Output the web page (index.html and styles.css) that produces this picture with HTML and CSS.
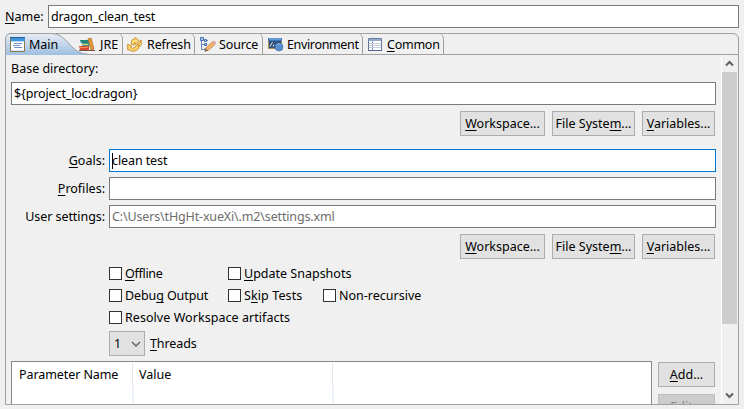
FILE: index.html
```html
<!DOCTYPE html>
<html lang="en">
<head>
<meta charset="utf-8">
<title>Run configuration</title>
<link rel="stylesheet" href="styles.css">
</head>
<body>
<label class="name-row"><span class="name-label"><u>N</u>ame:</span><span class="field name-field">dragon_clean_test</span></label>
<main class="folder">
  <nav class="tabs">
    <div class="tab tab-main">
      <svg class="tab-shape" width="84" height="22" viewBox="0 0 84 22"><defs><linearGradient id="sel" x2="0" y2="1"><stop stop-color="#e9eef5"/><stop offset="1" stop-color="#9fbfe0"/></linearGradient></defs><path d="M0 22V5Q0 0 5 0H46C64 0 64 21 84 21V22Z" fill="url(#sel)"/><path d="M.5 22V6Q1 .5 6 .5H46C64 .5 64 21.5 84 21.5" fill="none" stroke="#a0a0a0"/></svg>
      <svg class="icon" width="16" height="16" viewBox="0 0 16 16"><path d="M.5.5h14v14H.5z" fill="#fff" stroke="#8a7a48"/><path d="M1 1h14v3H1z" fill="#3e96df"/><path d="M0 .5h15" stroke="#245a94"/><path d="M1 4.500h13" stroke="#b8dcf5"/><path d="M4 6.500h8M3 8.500h7M4 10.500h8" stroke="#6f91c7"/><path d="M1 13.500h13" stroke="#d7e8f7"/></svg>
      <span class="t-main">Main</span>
    </div>
    <div class="tab tab-jre">
      <svg class="icon" width="16" height="16" viewBox="0 0 16 16"><path d="M1 3h9v3H2z" fill="#1f8579"/><path d="M3 6h8v3H3z" fill="#42a593"/><path d="M3 7.500h6" stroke="#e0c36b"/><path d="M0 9h10v4H1z" fill="#d94a2c"/><path d="M1 10.500h8" stroke="#f28a55"/><path d="M9 2l3-1 3 11-3 1z" fill="#e79e39" stroke="#a66025" stroke-width=".7"/><path d="M0 13.500h16" stroke="#73564b"/></svg>
      <span class="t-jre">JRE</span>
    </div>
    <div class="tab tab-refresh">
      <svg class="icon" width="16" height="16" viewBox="0 0 16 16"><path d="M4.500 7.500V4Q5 2 8 2V.5l4.500 3.500L8 7.500V5.500Q7 5.500 7 8ZM10.500 7Q14 7 14 3Q15.500 7 13 9.500L10.500 8Z" fill="#ffdd7a" stroke="#ca8b25" stroke-width=".9"/><path d="M.7 7L5 9.500 3.500 10.500Q5 12 8 10.500L9 8.500 12 8Q13 12 8 14Q4 15 2 12.500L.7 13Z" fill="#ffd66b" stroke="#ca8b25" stroke-width=".9"/></svg>
      <span class="t-refresh">Refresh</span>
    </div>
    <div class="tab tab-source">
      <svg class="icon" width="16" height="16" viewBox="0 0 16 16"><path d="M1.500 4v8.500H6M1.500 7.500H4M5 3.500h3" fill="none" stroke="#6188c2"/><path d="M.5.500h3v3h-3zM4.500 2.500h2v2h-2zM4.500 6.500h2v2h-2zM5 11.500h2v2H5z" fill="#a8c8ee" stroke="#4a73b3"/><path d="M5 14.500l1-4 7-6 2.500 2.500-7 6z" fill="#f3b76d" stroke="#bc8045" stroke-width=".8"/><path d="M12 5l2-1.500 2 2L14.500 8z" fill="#d9a6a0"/><path d="M5 14.500l1-3 2 2z" fill="#77624d"/></svg>
      <span class="t-source">Source</span>
    </div>
    <div class="tab tab-env">
      <svg class="icon" width="16" height="16" viewBox="0 0 16 16"><path d="M.5 1.500h13v10H.5z" fill="#355078" stroke="#a68c51"/><path d="M0 1h14v3H0z" fill="#3978bb"/><path d="M1 2h12" stroke="#8bc0ea"/><path d="M2 9.500L4.500 5M5 9.500l1-2" stroke="#dce8f5"/><circle cx="11" cy="10" r="4" fill="#568fcb" stroke="#3d75b3" stroke-width=".7"/><path d="M8.500 8.500q2-3 4-1" fill="none" stroke="#93bde4"/></svg>
      <span class="t-env">Environment</span>
    </div>
    <div class="tab tab-common">
      <svg class="icon" width="16" height="16" viewBox="0 0 16 16"><path d="M.5 1.500h13v12H.5z" fill="#fff" stroke="#66799e"/><path d="M1 2h12v2H1z" fill="#93a8ca"/><path d="M4.500 4v9" stroke="#8094b7"/><path d="M1 6.500h12M1 8.500h12M1 10.500h12" stroke="#c5cddd"/><path d="M0 13.500h14" stroke="#4e638b"/></svg>
      <span class="t-common"><u>C</u>ommon</span>
    </div>
  </nav>
  <div class="body">
    <section class="content">
      <div class="base-label">Base directory:</div>
      <div class="field base-field">${project_loc:dragon}</div>
      <div class="buttons"><button class="b-work"><u>W</u>orkspace...</button><button class="b-file">File Syste<u>m</u>...</button><button class="b-var"><u>V</u>ariables...</button></div>
      <div class="form">
        <label class="t-goals"><u>G</u>oals:</label><div class="field focused"><i class="caret"></i>clean test</div>
        <label class="t-prof"><u>P</u>rofiles:</label><div class="field"></div>
        <label class="t-user">User settings:</label><div class="field muted">C:\Users\tHgHt-xueXi\.m2\settings.xml</div>
      </div>
      <div class="buttons second"><button class="b-work"><u>W</u>orkspace...</button><button class="b-file">File Syste<u>m</u>...</button><button class="b-var"><u>V</u>ariables...</button></div>
      <div class="checks">
        <label><i class="box"></i><span class="t-off"><u>O</u>ffline</span></label><label class="wide"><i class="box"></i><span class="t-upd"><u>U</u>pdate Snapshots</span></label>
        <label><i class="box"></i><span class="t-debug">Debu<u>g</u> Output</span></label><label><i class="box"></i><span class="t-skip">S<u>k</u>ip Tests</span></label><label><i class="box"></i><span class="t-non">Non-recursive</span></label>
        <label class="full"><i class="box"></i><span class="t-res">Resolve Workspace artifacts</span></label>
      </div>
      <div class="threads"><div class="combo">1<svg width="10" height="6" viewBox="0 0 10 6"><path d="M1 1l4 4 4-4" fill="none" stroke="#606060" stroke-width="1.3"/></svg></div><span class="t-thr"><u>T</u>hreads</span></div>
      <div class="params">
        <div class="table"><div class="col c1"><span class="t-param">Parameter Name</span></div><div class="col c2"><span class="t-val">Value</span></div></div>
        <div class="side"><button class="b-add"><u>A</u>dd...</button><button class="b-edit" disabled>Edit...</button></div>
      </div>
    </section>
    <aside class="scroll">
      <svg width="9" height="7" viewBox="0 0 9 7"><path d="M1 5.500L4.500 2 8 5.500" fill="none" stroke="#606060" stroke-width="2"/></svg>
      <div class="thumb"></div>
      <svg class="down" width="9" height="7" viewBox="0 0 9 7"><path d="M1 1.500L4.500 5 8 1.500" fill="none" stroke="#606060" stroke-width="2"/></svg>
    </aside>
  </div>
</main>
</body>
</html>
```
FILE: styles.css
```css
* { box-sizing: border-box; }
body { margin: 0; padding: 5px; width: 744px; height: 409px; overflow: hidden; background: #f0f0f0; color: #000; font: 12.5px/16px "Noto Sans", sans-serif; white-space: nowrap; }
u { text-decoration: underline; text-decoration-thickness: 1px; text-underline-offset: 2px; text-decoration-skip-ink: none; }
i { font-style: normal; }
.name-row { display: flex; align-items: center; height: 23px; }
.name-label { width: 43px; }
.field { height: 23px; border: 1px solid #7a7a7a; background: #fff; padding: 3px 2px; line-height: 16px; letter-spacing: -0.1px; }
.name-field { width: 691px; letter-spacing: -0.15px; }
.folder { width: 734px; height: 372px; margin-top: 5px; border: 1px solid #a0a0a0; border-radius: 6px 6px 0 0; }
.tabs { display: flex; height: 22px; margin: -1px 0 0 -1px; border-bottom: 1px solid #a0a0a0; }
.tab { display: flex; align-items: center; height: 22px; padding: 1px 0 0 5px; border: solid #a0a0a0; border-width: 0 1px 0 0; border-top-right-radius: 6px; }
.tab .icon { flex: none; margin-right: 3px; }
.tab-main { position: relative; border: 0; width: 74px; }
.tab-shape { position: absolute; left: 0; top: 0; }
.tab-main .icon, .tab-main span { position: relative; }
.tab-jre { width: 44px; padding-left: 0; }
.tab-jre .icon { margin-right: 5px; }
.tab-refresh { width: 72px; padding-left: 4px; }
.tab-refresh .icon { margin-right: 4px; }
.t-refresh { letter-spacing: -0.15px; }
.tab-source { width: 68px; }
.t-source { letter-spacing: -0.15px; }
.tab-env { width: 100px; }
.t-env { letter-spacing: -0.35px; }
.tab-common { width: 81px; }
.t-common { letter-spacing: -0.25px; }
.body { display: flex; height: 349px; overflow: hidden; }
.content { width: 715px; padding: 6px 0 0 5px; }
.base-label { height: 21px; }
.base-field { width: 705px; letter-spacing: -0.12px; }
.buttons { display: flex; justify-content: flex-end; gap: 7px; width: 704px; margin-top: 6px; }
button { height: 25px; border: 1px solid #adadad; background: #e1e1e1; padding: 0; font: inherit; color: #000; white-space: nowrap; text-align: center; }
.b-work { width: 85px; }
.b-file { width: 83px; }
.b-var { width: 73px; }
.form { display: grid; grid-template-columns: 94px 607px; column-gap: 4px; row-gap: 5px; margin-top: 13px; align-items: center; }
.form label { text-align: right; }
.t-user { letter-spacing: -0.06px; }
.focused { border-color: #0078d7; }
.caret { float: left; width: 1px; height: 16px; margin-right: -1px; background: #000; }
.muted { color: #6d6d6d; letter-spacing: -0.15px; }
.checks { display: grid; grid-template-columns: 119px 95px 1fr; grid-auto-rows: 22px; margin: 3px 0 0 98px; }
.checks label { display: flex; align-items: center; padding-top: 1px; }
.wide { grid-column: span 2; }
.full { grid-column: span 3; }
.box { flex: none; width: 13px; height: 13px; border: 1px solid #333; background: #fff; margin-right: 3px; }
.t-off { letter-spacing: -0.3px; }
.t-debug { letter-spacing: -0.1px; }
.t-skip { letter-spacing: 0.1px; }
.t-res { letter-spacing: 0.05px; }
.threads { display: flex; align-items: center; gap: 5px; margin: 3px 0 0 98px; height: 25px; }
.t-thr { letter-spacing: -0.1px; }
.combo { display: flex; align-items: center; justify-content: space-between; width: 36px; height: 25px; padding: 0 3px 0 4px; border: 1px solid #adadad; background: #e1e1e1; }
.params { display: flex; gap: 6px; margin-top: 5px; height: 60px; }
.table { display: flex; width: 641px; border: 1px solid #828790; background: #fff; padding-top: 1px; }
.col { width: 200px; padding: 4px 0 0 6px; background: linear-gradient(#e5e5e5, #e5e5e5) right 1px top 0 / 1px 24px no-repeat, linear-gradient(#edf3fe, #edf3fe) right 0 top 24px / 2px 40px no-repeat; }
.c1 { width: 122px; padding-left: 7px; }
.c2 { padding-left: 5px; }
.t-param { letter-spacing: -0.08px; }
.side { display: flex; flex-direction: column; gap: 7px; padding-top: 1px; width: 57px; }
.b-edit { color: #838383; background: #ccc; border-color: #bfbfbf; }
.scroll { display: flex; flex-direction: column; align-items: center; width: 17px; height: 349px; border-left: 1px solid #fff; border-right: 1px solid #f0f0f0; }
.scroll svg { flex: none; margin: 5px 0; }
.thumb { width: 15px; height: 252px; background: #cdcdcd; }
.scroll .down { margin-top: auto; }
```
